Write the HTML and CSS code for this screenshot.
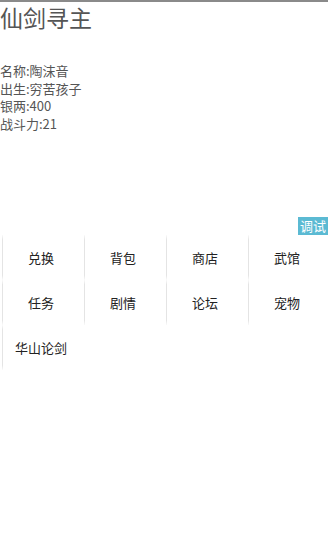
FILE: index.html
```html
<!DOCTYPE html>
<html lang="zh">
<head>
<meta charset="utf-8">
<title>仙剑寻主</title>
<link rel="stylesheet" href="styles.css">
</head>
<body>
<div class="topline"></div>
<h1 class="title">仙剑寻主</h1>
<div class="info">
  <div class="line">名称:陶沫音</div>
  <div class="line">出生:穷苦孩子</div>
  <div class="line">银两:400</div>
  <div class="line">战斗力:21</div>
</div>
<div class="toolbar"><span class="debug">调试</span></div>
<div class="menu">
  <div class="cell">兑换</div>
  <div class="cell">背包</div>
  <div class="cell">商店</div>
  <div class="cell">武馆</div>
  <div class="cell">任务</div>
  <div class="cell">剧情</div>
  <div class="cell">论坛</div>
  <div class="cell">宠物</div>
  <div class="cell">华山论剑</div>
</div>
</body>
</html>
```
FILE: styles.css
```css
html, body {
  margin: 0;
  padding: 0;
  background: #ffffff;
  font-family: "Noto Sans CJK SC", "Noto Sans", sans-serif;
}
.topline {
  height: 2px;
  background: #8a8a8a;
}
.title {
  margin: 0;
  font-size: 23px;
  line-height: 30px;
  font-weight: normal;
  color: #555555;
}
.info {
  margin-top: 30px;
  font-size: 13px;
  line-height: 17.6px;
  color: #555555;
}
.toolbar {
  margin-top: 85px;
  display: flex;
  justify-content: flex-end;
}
.debug {
  display: block;
  width: 30px;
  height: 18px;
  line-height: 18px;
  text-align: center;
  font-size: 13px;
  color: #ffffff;
  background: #5bbad3;
}
.menu {
  display: grid;
  grid-template-columns: repeat(4, 82px);
  grid-auto-rows: 45px;
}
.cell {
  margin-left: 2px;
  border-left: 1px solid #e6e6e6;
  border-image: linear-gradient(to bottom, rgba(230,230,230,0), #e4e4e4 12%, #e4e4e4 88%, rgba(230,230,230,0)) 1;
  display: flex;
  align-items: center;
  justify-content: center;
  font-size: 13px;
  color: #222222;
  padding-right: 3px;
}
```
